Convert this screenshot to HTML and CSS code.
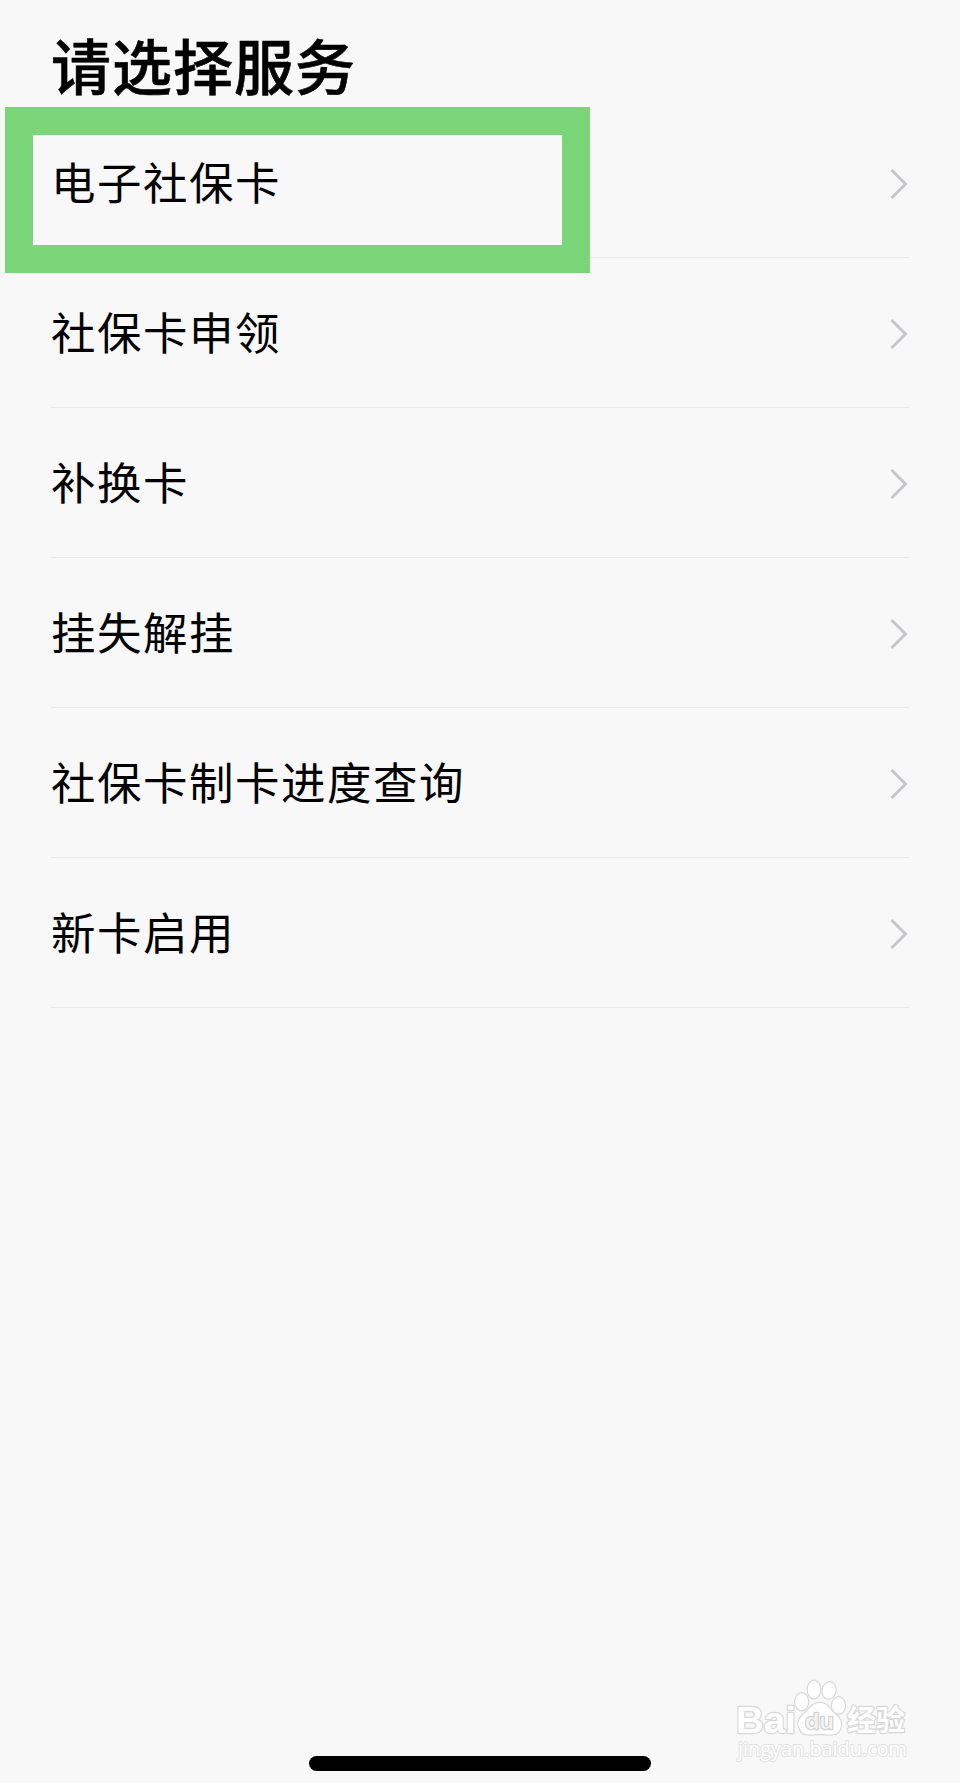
FILE: index.html
```html
<!DOCTYPE html>
<html lang="zh-CN">

<head>
    <meta charset="UTF-8">
    <title>请选择服务</title>
    <link rel="stylesheet" href="styles.css">
</head>

<body>
<h1>请选择服务</h1>
<ul class="services">
    <li class="selected">
        <span>电子社保卡</span>
        <svg class="arrow" viewBox="0 0 18 32"><path d="M1.5 2L15.5 16L1.5 30"/></svg>
    </li>
    <li>
        <span>社保卡申领</span>
        <svg class="arrow" viewBox="0 0 18 32"><path d="M1.5 2L15.5 16L1.5 30"/></svg>
    </li>
    <li>
        <span>补换卡</span>
        <svg class="arrow" viewBox="0 0 18 32"><path d="M1.5 2L15.5 16L1.5 30"/></svg>
    </li>
    <li>
        <span>挂失解挂</span>
        <svg class="arrow" viewBox="0 0 18 32"><path d="M1.5 2L15.5 16L1.5 30"/></svg>
    </li>
    <li>
        <span>社保卡制卡进度查询</span>
        <svg class="arrow" viewBox="0 0 18 32"><path d="M1.5 2L15.5 16L1.5 30"/></svg>
    </li>
    <li>
        <span>新卡启用</span>
        <svg class="arrow" viewBox="0 0 18 32"><path d="M1.5 2L15.5 16L1.5 30"/></svg>
    </li>
</ul>
<svg class="watermark" viewBox="0 0 180 90">
    <text class="brand" x="0" y="53" textLength="60" lengthAdjust="spacingAndGlyphs">Bai</text>
    <g class="paw">
        <ellipse cx="65.7" cy="21.8" rx="6.5" ry="8.5"/>
        <ellipse cx="78" cy="9.5" rx="6.2" ry="8.8"/>
        <ellipse cx="93" cy="10.5" rx="6.5" ry="8.3" transform="rotate(12 93 10.5)"/>
        <ellipse cx="102.5" cy="25.5" rx="6.5" ry="8.3"/>
        <path d="M84 23C76 23 74 29 68 34C62 39 61 44 64 49C67 57 76 54 84 54C92 54 101 57 104 49C107 43 104 38 99 34C93 29 92 23 84 23Z"/>
    </g>
    <text class="du" x="69" y="49" textLength="29" lengthAdjust="spacingAndGlyphs">du</text>
    <text class="cn" x="111" y="51" textLength="58" lengthAdjust="spacingAndGlyphs">经验</text>
    <text class="url" x="2" y="76" textLength="169" lengthAdjust="spacingAndGlyphs">jingyan.baidu.com</text>
</svg>
<div class="home-bar"></div>
</body>

</html>
```

FILE: styles.css
```css
* {
    box-sizing: border-box;
}

body {
    position: relative;
    display: flex;
    flex-direction: column;
    height: 1783px;
    margin: 0;
    padding: 0 51px 12px;
    background-color: #f8f8f8;
    color: #000;
    font-family: "Noto Sans CJK SC", sans-serif;
}

h1 {
    height: 108px;
    margin: 0;
    padding-top: 20px;
    font-size: 60px;
    font-weight: 500;
    line-height: 87px;
    letter-spacing: 1px;
    -webkit-text-stroke: 0.6px #000;
}

.services {
    margin: 0;
    padding: 0;
    list-style: none;
}

.services li {
    position: relative;
    display: flex;
    align-items: center;
    justify-content: space-between;
    height: 150px;
    padding: 0 1px 0 0;
    border-bottom: 1px solid #e9e9e9;
    font-size: 44.5px;
    line-height: 66px;
    letter-spacing: 1.5px;
}

.services span {
    padding-bottom: 4px;
}

/* green frame round the chosen service */
.selected::after {
    content: "";
    position: absolute;
    z-index: 1;
    top: -1px;
    left: -46px;
    box-sizing: border-box;
    width: 585px;
    height: 166px;
    border: 28px solid #7ad678;
}

.arrow {
    width: 18px;
    height: 32px;
    margin-top: 2px;
    fill: none;
    stroke: #c7c7cb;
    stroke-width: 3;
}

.home-bar {
    align-self: center;
    width: 342px;
    height: 15px;
    margin-top: auto;
    border-radius: 8px;
    background-color: #000;
}

.watermark {
    position: absolute;
    left: 736px;
    top: 1680px;
    width: 180px;
    height: 90px;
    overflow: visible;
    fill: #fff;
    stroke: #d8d8d8;
    stroke-width: 2.4;
    stroke-linejoin: round;
    paint-order: stroke;
}

.brand {
    font: bold 37px "Liberation Sans", sans-serif;
}

.du {
    font: 600 22px "Open Sans", sans-serif;
    fill: #f4f4f4;
    stroke: #d0d0d0;
}

.cn {
    font: bold 29px "Noto Sans CJK SC", sans-serif;
}

.url {
    font: 20px "Open Sans", sans-serif;
    stroke: #e2e2e2;
    stroke-width: 2;
}
```
